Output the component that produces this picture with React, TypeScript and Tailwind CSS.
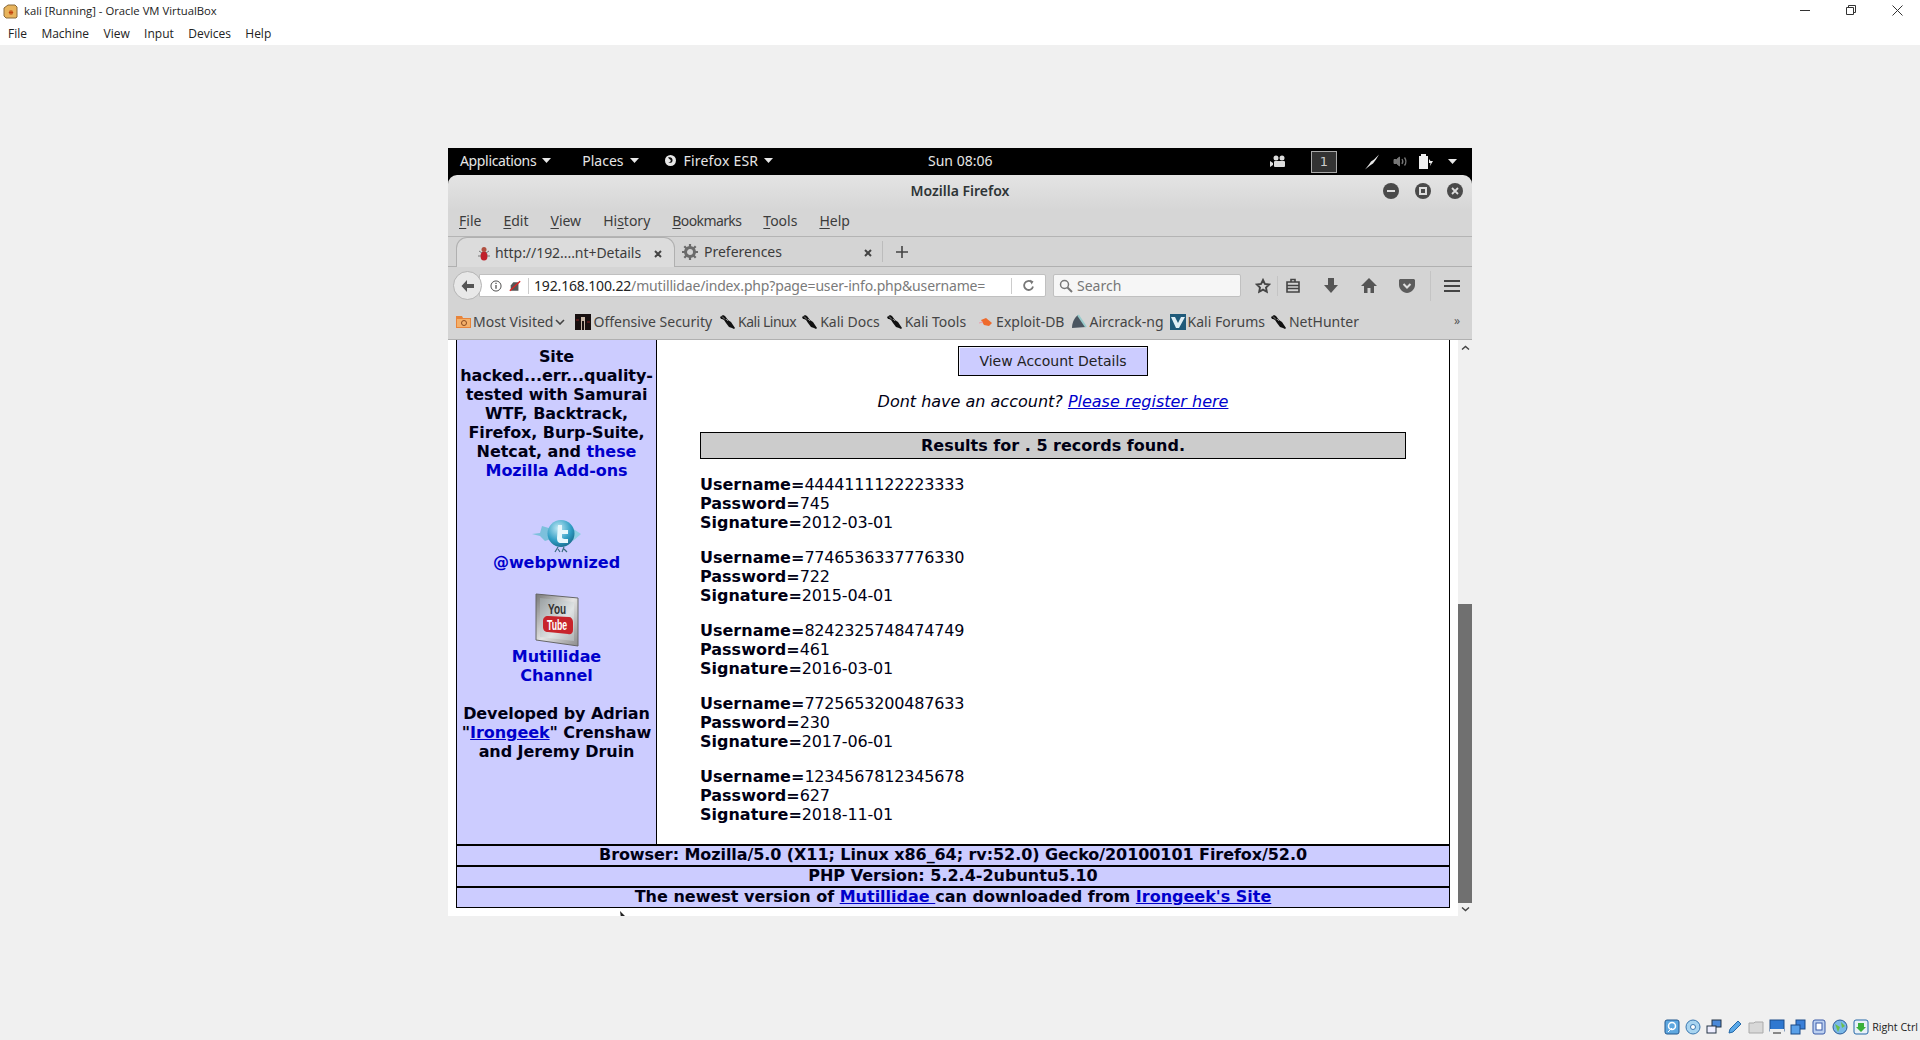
import React from "react";

const Caret = ({ c = "#e8e8e8" }: { c?: string }) => (
  <svg width="9" height="5" viewBox="0 0 9 5" className="ml-[6px]"><path d="M0 0h9L4.500 5z" fill={c} /></svg>
);

const Dragon = () => (
  <svg width="16" height="16" viewBox="0 0 16 16" className="shrink-0">
    <path d="M0 3l3-2 2 1 3 4 3 2 4 6-1 1-2-1-3-1-3-4-2-3-2-1-1 0z" fill="#111" />
    <path d="M2 2.500l3 3M6 5l2 2" stroke="#888" strokeWidth="1" />
  </svg>
);

const Under = ({ k, rest, cls }: { k: string; rest: string; cls?: string }) => (
  <span className={cls}><span className="underline decoration-1 underline-offset-2">{k}</span>{rest}</span>
);

function VBoxBar() {
  return (
    <div className="bg-white h-[45px] shrink-0 font-['Open_Sans',sans-serif] text-[#222]">
      <div className="h-[23px] flex items-center pl-[3px] relative text-[11.3px]">
        <svg width="15" height="15" viewBox="0 0 15 15" className="mr-[6px]">
          <path d="M1 4l4-3h7l2 2v10l-1 1H3l-2-2z" fill="#e8b45c" stroke="#8a6a3a" />
          <path d="M8 6v5M5.800 8.500h4.400M6.200 7l3.600 3M9.800 7l-3.600 3" stroke="#c2410c" strokeWidth="1" />
        </svg>
        <span>kali [Running] - Oracle VM VirtualBox</span>
        <div className="absolute right-0 top-0 flex h-[20px] items-center">
          <div className="w-[46px] flex justify-center"><div className="w-[10px] h-px bg-[#333]" /></div>
          <div className="w-[46px] flex justify-center">
            <svg width="10" height="10" viewBox="0 0 10 10" fill="none" stroke="#333"><path d="M.5 2.500h7v7h-7zM2.500 2.500v-2h7v7h-2" /></svg>
          </div>
          <div className="w-[46px] flex justify-center">
            <svg width="11" height="11" viewBox="0 0 11 11" stroke="#333"><path d="M.5.5l10 10M10.500.5l-10 10" /></svg>
          </div>
        </div>
      </div>
      <div className="h-[22px] flex items-center gap-[14.4px] pl-[8px] text-[12px]">
        <span>File</span><span>Machine</span><span>View</span><span>Input</span><span>Devices</span><span>Help</span>
      </div>
    </div>
  );
}

function GnomeBar() {
  return (
    <div className="h-[27px] bg-black text-[#e6e6e6] flex items-center font-['Noto_Sans',sans-serif] text-[14px] relative shrink-0">
      <div className="flex items-center pl-[12px] -mt-[2px]"><span className="tracking-[-0.35px]">Applications</span><Caret /></div>
      <div className="flex items-center pl-[31px] -mt-[2px]"><span>Places</span><Caret /></div>
      <div className="flex items-center pl-[25px] -mt-[2px]">
        <svg width="13" height="13" viewBox="0 0 13 13" className="mr-[7px]">
          <circle cx="6.500" cy="6.500" r="5.500" fill="#e8e8e8" />
          <path d="M4 3.500c3-1 5 1 4.500 3.500-.5 2-3 2.500-4 1 1.500.5 2.500-.5 2.300-1.500C6.600 5.500 5 5 4 3.500z" fill="#111" />
        </svg>
        <span className="tracking-[0.2px]">Firefox ESR</span><Caret />
      </div>
      <span className="absolute left-[480px] top-[2px]">Sun 08:06</span>
      <div className="ml-auto flex items-center">
        <svg width="16" height="13" viewBox="0 0 16 13" fill="#ddd" className="mr-[25px]">
          <circle cx="6" cy="3" r="2.500" /><circle cx="12" cy="3" r="2.500" /><rect x="4" y="6" width="11" height="6" rx="1" /><path d="M0 6l3 2v2l-3 2z" />
        </svg>
        <div className="w-[26px] h-[22px] border border-[#aaa] bg-[#333] text-[#ccc] flex items-center justify-center text-[13px] mr-[28px] font-['DejaVu_Sans',sans-serif]">1</div>
        <svg width="15" height="16" viewBox="0 0 15 16" className="mr-[13px]"><path d="M0 15.500l4-5 2-3 3-2 5-5-3 5-3 4-3 2z" fill="#e8e8e8" /></svg>
        <svg width="16" height="13" viewBox="0 0 16 13" fill="none" stroke="#777" className="mr-[9px]">
          <path d="M1 4.500h2.500L6.500 2v9l-3-2.500H1z" fill="#777" /><path d="M9 4c1 1.500 1 3.500 0 5M11.500 2.500c1.800 2.500 1.800 5.500 0 8" strokeWidth="1.300" />
        </svg>
        <svg width="16" height="17" viewBox="0 0 16 17" className="mr-[14px]">
          <path d="M1 3h2V1h5v2h2v13H1z" fill="#eee" /><path d="M11 6l1.500 2H15l-3 5 .5-3H11z" fill="#eee" />
        </svg>
        <svg width="9" height="5" viewBox="0 0 9 5" className="mr-[15px]"><path d="M0 0h9L4.500 5z" fill="#e8e8e8" /></svg>
      </div>
    </div>
  );
}

const WinBtn = ({ children }: { children: React.ReactNode }) => (
  <div className="w-[16px] h-[16px] rounded-full bg-[#4a4a4a] flex items-center justify-center">{children}</div>
);

function TitleBar() {
  return (
    <div className="h-[35px] rounded-t-[9px] bg-gradient-to-b from-[#e4e4e4] to-[#d6d6d6] flex items-center justify-center relative font-['Noto_Sans',sans-serif] text-[14px] font-semibold text-[#2e3436] shrink-0">
      <span className="-mt-[4px]">Mozilla Firefox</span>
      <div className="absolute right-[9px] top-[8px] flex gap-[16px]">
        <WinBtn><div className="w-[8px] h-[2px] bg-[#ddd]" /></WinBtn>
        <WinBtn><div className="w-[8px] h-[8px] border-2 border-[#ddd]" /></WinBtn>
        <WinBtn><svg width="8" height="8" viewBox="0 0 8 8" stroke="#ddd" strokeWidth="1.800"><path d="M1 1l6 6M7 1L1 7" /></svg></WinBtn>
      </div>
    </div>
  );
}

function MenuBar() {
  return (
    <div className="h-[27px] bg-[#d6d6d6] border-b border-[#b4b4b4] flex items-start gap-[22px] pl-[11px] font-['Noto_Sans',sans-serif] text-[14px] text-[#3c3c3c] shrink-0">
      <Under k="F" rest="ile" /><Under k="E" rest="dit" /><Under k="V" rest="iew" />
      <span>Hi<span className="underline decoration-1 underline-offset-2">s</span>tory</span>
      <Under k="B" rest="ookmarks" cls="tracking-[-0.6px]" /><Under k="T" rest="ools" /><Under k="H" rest="elp" />
    </div>
  );
}

function TabBar() {
  return (
    <div className="h-[30px] bg-[#d4d4d4] border-b border-[#b0b0b0] flex items-stretch pl-[8px] font-['Noto_Sans',sans-serif] text-[14px] text-[#3c3c3c] shrink-0">
      <div className="w-[219px] h-[30px] bg-[#dcdcdc] border border-b-0 border-[#b0b0b0] rounded-t-[11px] flex items-center pl-[20px] relative">
        <svg width="14" height="16" viewBox="0 0 14 16" className="mr-[4px]">
          <ellipse cx="7" cy="11" rx="3.500" ry="4.500" fill="#c0202a" /><circle cx="7" cy="4.500" r="2.500" fill="#b05040" />
          <path d="M2 6l3 2M12 6L9 8M1 11h3M13 11h-3" stroke="#777" strokeWidth="1" />
        </svg>
        <span className="tracking-[-0.05px]">http://192....nt+Details</span>
        <svg width="8" height="8" viewBox="0 0 8 8" stroke="#444" strokeWidth="2" className="absolute left-[197px] top-[12px]"><path d="M1 1l6 6M7 1L1 7" /></svg>
      </div>
      <div className="w-[207px] flex items-center pl-[7px] relative">
        <svg width="16" height="16" viewBox="0 0 16 16" className="mr-[6px]">
          <circle cx="8" cy="8" r="4.500" fill="none" stroke="#6b6b6b" strokeWidth="3" />
          <path d="M8 0v3M8 13v3M0 8h3M13 8h3M2.300 2.300l2 2M11.700 11.700l2 2M2.300 13.700l2-2M11.700 4.300l2-2" stroke="#6b6b6b" strokeWidth="2.200" />
        </svg>
        <span>Preferences</span>
        <svg width="8" height="8" viewBox="0 0 8 8" stroke="#444" strokeWidth="2" className="absolute right-[10px] top-[12px]"><path d="M1 1l6 6M7 1L1 7" /></svg>
      </div>
      <div className="flex items-center w-[38px] justify-center border-l border-[#bcbcbc] my-[4px]">
        <svg width="12" height="12" viewBox="0 0 12 12" stroke="#444" strokeWidth="1.600"><path d="M6 0v12M0 6h12" /></svg>
      </div>
    </div>
  );
}

function NavBar() {
  return (
    <div className="h-[37px] bg-[#d4d4d4] flex items-center pl-[5px] font-['Noto_Sans',sans-serif] text-[14px] shrink-0 relative">
      <div className="w-[29px] h-[29px] rounded-full border border-[#b4b4b4] bg-[#e8e8e8] flex items-center justify-center z-10 shrink-0">
        <svg width="15" height="14" viewBox="0 0 15 14"><path d="M7 1L1.500 7 7 13V9h7V5H7z" fill="#555" /></svg>
      </div>
      <div className="w-[567px] h-[23px] bg-white border border-[#c0c0c0] rounded-r-[2px] -ml-[3px] flex items-center pl-[10px] relative shrink-0">
        <svg width="12" height="12" viewBox="0 0 13 13" fill="none" stroke="#444" className="mr-[7px]">
          <circle cx="6.500" cy="6.500" r="5.500" /><path d="M6.500 5.500v4M6.500 3v1.300" strokeWidth="1.300" />
        </svg>
        <svg width="12" height="12" viewBox="0 0 14 13" className="mr-[7px]">
          <path d="M2 12V6l3-4h6v10z" fill="#555" /><path d="M1 12L13 1" stroke="#d22" strokeWidth="1.600" />
        </svg>
        <div className="w-px h-[16px] bg-[#ccc] mr-[5px]" />
        <span className="text-[#222] whitespace-nowrap tracking-[-0.16px]">192.168.100.22<span className="text-[#7a7a7a]">/mutillidae/index.php?page=user-info.php&amp;username=</span></span>
        <div className="absolute right-[33px] top-[3px] w-px h-[16px] bg-[#ccc]" />
        <svg width="13" height="13" viewBox="0 0 13 13" fill="none" stroke="#777" strokeWidth="1.800" className="absolute right-[10px] top-[4px]">
          <path d="M11 7.500A4.500 4.500 0 1 1 9.500 3" /><path d="M8 .8l3.500 1.700-2 3z" fill="#777" stroke="none" />
        </svg>
      </div>
      <div className="w-[188px] h-[23px] bg-[#f6f6f6] border border-[#c0c0c0] rounded-[2px] ml-[7px] flex items-center pl-[5px] text-[#777] shrink-0">
        <svg width="14" height="14" viewBox="0 0 14 14" fill="none" stroke="#777" strokeWidth="1.500" className="mr-[4px]">
          <circle cx="5.500" cy="5.500" r="4" /><path d="M8.500 8.500l4.500 4.500" strokeWidth="2" />
        </svg>
        Search
      </div>
      <svg width="16" height="16" viewBox="0 0 24 24" fill="none" stroke="#444" strokeWidth="2.800" className="ml-[14px]">
        <path d="M12 3l2.800 6 6.400.8-4.700 4.400 1.200 6.400-5.700-3.200-5.700 3.200 1.200-6.400L2.800 9.800 9.200 9z" />
      </svg>
      <div className="w-px h-[20px] bg-[#c4c4c4] ml-[6px]" />
      <svg width="14" height="15" viewBox="0 0 14 15" fill="none" stroke="#444" strokeWidth="1.600" className="ml-[8px]">
        <path d="M1 4h12v10H1zM5 4V1.500h4V4M1 7.500h12M1 10.500h12" />
      </svg>
      <svg width="14" height="15" viewBox="0 0 14 15" className="ml-[24px]"><path d="M4 0h6v7h4l-7 8-7-8h4z" fill="#555" /></svg>
      <svg width="16" height="15" viewBox="0 0 16 15" className="ml-[23px]">
        <path d="M8 0L0 8h3v7h3.500v-5h3v5H13V8h3z" fill="#555" />
      </svg>
      <svg width="16" height="14" viewBox="0 0 16 14" className="ml-[22px]">
        <path d="M1 0h14l1 1v5c0 4-4 8-8 8S0 10 0 6V1z" fill="#5c5c5c" /><path d="M4.500 5L8 8.500 11.500 5" stroke="#ddd" strokeWidth="2" fill="none" />
      </svg>
      <div className="w-px h-[30px] bg-[#c4c4c4] ml-[15px]" />
      <div className="flex flex-col gap-[3px] ml-[13px]">
        <div className="w-[16px] h-[2px] bg-[#444]" /><div className="w-[16px] h-[2px] bg-[#444]" /><div className="w-[16px] h-[2px] bg-[#444]" />
      </div>
    </div>
  );
}

const Mark = ({ label, icon, cls, tcls }: { label: string; icon: React.ReactNode; cls: string; tcls?: string }) => (
  <div className={`flex items-center gap-[2px] ${cls}`}>{icon}<span className={tcls}>{label}</span></div>
);

function BookmarkBar() {
  return (
    <div className="h-[36px] bg-[#d4d4d4] border-b border-[#b0b0b0] flex items-center pl-[8px] font-['Noto_Sans',sans-serif] text-[14px] text-[#444] shrink-0 relative">
      <div className="flex items-center gap-[2px]">
        <svg width="15" height="15" viewBox="0 0 15 15"><path d="M0 2h6l1 2h8v10H0z" fill="#e8843a" /><path d="M1 5h13v8H1z" fill="#f4b06a" /><circle cx="8" cy="9" r="2.500" fill="none" stroke="#8a4a20" /></svg>
        <span>Most Visited</span>
        <svg width="10" height="6" viewBox="0 0 10 6" fill="none" stroke="#444" strokeWidth="1.600"><path d="M1 1l4 4 4-4" /></svg>
      </div>
      <Mark cls="ml-[10px]" label="Offensive Security" icon={<svg width="16" height="16" viewBox="0 0 16 16"><rect width="16" height="16" fill="#181010" /><path d="M6 3h4v13H9V7H7v9H6z" fill="#c9b8a8" /><path d="M1 6h3M12 8h3" stroke="#822" /></svg>} />
      <Mark cls="ml-[8px]" tcls="tracking-[-0.5px]" label="Kali Linux" icon={<Dragon />} />
      <Mark cls="ml-[6px]" label="Kali Docs" icon={<Dragon />} />
      <Mark cls="ml-[7px]" label="Kali Tools" icon={<Dragon />} />
      <Mark cls="ml-[12px]" label="Exploit-DB" icon={<svg width="16" height="16" viewBox="0 0 16 16"><path d="M3 6l5-2 6 5-3 3-5-1z" fill="#ee6a2c" /><path d="M1 9l4-1" stroke="#e9a" /></svg>} />
      <Mark cls="ml-[7px]" label="Aircrack-ng" icon={<svg width="16" height="16" viewBox="0 0 16 16"><path d="M1 14C1 8 4 3 7 1l8 12z" fill="#4a5560" /><path d="M7 1l8 12" stroke="#9cc" strokeWidth="2" /></svg>} />
      <Mark cls="ml-[6px]" label="Kali Forums" icon={<svg width="16" height="16" viewBox="0 0 16 16"><rect width="16" height="16" fill="#1f5a7a" /><path d="M1 3l5 11 3 0 6-11H11L8 9 5 3z" fill="#dfeef5" /></svg>} />
      <Mark cls="ml-[6px]" label="NetHunter" icon={<Dragon />} />
      <span className="absolute right-[12px] top-[8px] text-[#555] text-[12px]">»</span>
    </div>
  );
}

function Bird() {
  return (
    <svg width="49" height="33" viewBox="0 0 49 33" className="block mx-auto">
      <defs>
        <radialGradient id="tw" cx="0.400" cy="0.300" r="0.800"><stop offset="0" stopColor="#bfe9f5" /><stop offset="0.600" stopColor="#2f9dc4" /><stop offset="1" stopColor="#14607f" /></radialGradient>
      </defs>
      <path d="M0 14l8-1 2-7 10 3 2 9-9 3-5-5z" fill="#7cc0dc" />
      <path d="M40 8l9 6-8 7z" fill="#90d0e4" />
      <circle cx="29" cy="13.500" r="13.500" fill="url(#tw)" />
      <path d="M26 5h4v5h6v4h-6v3c0 2 2 2 6 2v4h-7c-3 0-4-2-4-5z" fill="#e8f8fc" />
      <path d="M26 27l-3 5M26 29l2 3M32 27l-2 5M32 29l3 3" stroke="#3a6a80" strokeWidth="1.200" />
    </svg>
  );
}

function YouTube() {
  return (
    <svg width="44" height="54" viewBox="0 0 44 54" className="block mx-auto">
      <defs>
        <linearGradient id="yt" x1="0" y1="0" x2="1" y2="1"><stop offset="0" stopColor="#777" /><stop offset="0.500" stopColor="#e4e4e4" /><stop offset="1" stopColor="#8c8c8c" /></linearGradient>
        <linearGradient id="ytb" x1="0" y1="0" x2="1" y2="1"><stop offset="0" stopColor="#9aa0a2" /><stop offset="0.600" stopColor="#dfe3e4" /><stop offset="1" stopColor="#b0b4b6" /></linearGradient>
      </defs>
      <path d="M1 1l42 4v48L1 47z" fill="url(#yt)" stroke="#666" />
      <path d="M5 5l34 4v39L5 44z" fill="url(#ytb)" />
      <path d="M8 28c0-3 2-5 5-5l21 1c2 0 4 2 4 5v8c0 3-2 5-5 4l-20-2c-3 0-5-2-5-5z" fill="#c8242c" />
      <text x="22" y="21" textAnchor="middle" fontSize="15" fontWeight="bold" fill="#333" fontFamily="Liberation Sans" textLength="18" lengthAdjust="spacingAndGlyphs">You</text>
      <text x="22" y="37" textAnchor="middle" fontSize="14" fontWeight="bold" fill="#fff" fontFamily="Liberation Sans" textLength="20" lengthAdjust="spacingAndGlyphs">Tube</text>
    </svg>
  );
}

const A = ({ children }: { children: React.ReactNode }) => <span className="text-[#0000cc]">{children}</span>;
const U = ({ children }: { children: React.ReactNode }) => <span className="text-[#0000cc] underline">{children}</span>;

function Sidebar() {
  return (
    <div className="w-[200px] bg-[#ccccff] border-r border-black text-center font-bold pt-[7px] shrink-0 tracking-[-0.07px]">
      <p className="-mx-[2px]">Site<br />hacked...err...quality-<br />tested with Samurai<br />WTF, Backtrack,<br />Firefox, Burp-Suite,<br />Netcat, and <A>these</A><br /><A>Mozilla Add-ons</A></p>
      <div className="mt-[40px]"><Bird /></div>
      <p><A>@webpwnized</A></p>
      <div className="mt-[21px]"><YouTube /></div>
      <p><A>Mutillidae<br />Channel</A></p>
      <p className="mt-[19px]">Developed by Adrian<br />"<U>Irongeek</U>" Crenshaw<br />and Jeremy Druin</p>
    </div>
  );
}

const records = [
  ["4444111122223333", "745", "2012-03-01"],
  ["7746536337776330", "722", "2015-04-01"],
  ["8242325748474749", "461", "2016-03-01"],
  ["7725653200487633", "230", "2017-06-01"],
  ["1234567812345678", "627", "2018-11-01"],
];

function Main() {
  return (
    <div className="flex-1 bg-white min-w-0 pt-[6px] pl-[43px] pr-[43px]">
      <div className="flex justify-center">
        <div className="w-[190px] h-[30px] bg-[#ccccff] border border-black shadow-[inset_1px_1px_0_#eeeeff] flex items-center justify-center text-[14px] text-[#222]">View Account Details</div>
      </div>
      <p className="text-center italic mt-[16px] h-[19px]">Dont have an account? <span className="text-[#0000cc] underline">Please register here</span></p>
      <div className="h-[27px] mt-[21px] bg-[#cccccc] border border-black flex items-center justify-center font-bold">Results for . 5 records found.</div>
      <div className="mt-[16px] flex flex-col gap-[16px]">
        {records.map((r) => (
          <div key={r[0]}>
            <div><b>Username=</b><span className="tracking-[-0.18px]">{r[0]}</span></div>
            <div><b>Password=</b><span className="tracking-[-0.18px]">{r[1]}</span></div>
            <div><b>Signature=</b><span className="tracking-[-0.18px]">{r[2]}</span></div>
          </div>
        ))}
      </div>
    </div>
  );
}

function Page() {
  return (
    <div className="flex h-[576px] bg-white font-['DejaVu_Sans',sans-serif] text-[16px] leading-[19px] text-[#000014] shrink-0 overflow-hidden relative">
      <div className="w-[8px] shrink-0" />
      <div className="w-[994px] shrink-0 flex flex-col h-[568px]">
        <div className="flex flex-1 min-h-0 border-l border-r border-black">
          <Sidebar />
          <Main />
        </div>
        <div className="border-x border-t-2 border-black bg-[#ccccff] text-center font-bold h-[21px] leading-[17px] shrink-0 tracking-[-0.07px]">Browser: Mozilla/5.0 (X11; Linux x86_64; rv:52.0) Gecko/20100101 Firefox/52.0</div>
        <div className="border-x border-t-2 border-black bg-[#ccccff] text-center font-bold h-[21px] leading-[17px] shrink-0">PHP Version: 5.2.4-2ubuntu5.10</div>
        <div className="border-x border-t-2 border-b border-black bg-[#ccccff] text-center font-bold h-[22px] leading-[17px] shrink-0">The newest version of <U>Mutillidae </U>can downloaded from <U>Irongeek's Site</U></div>
      </div>
      <div className="w-[8px] shrink-0" />
      <div className="w-[14px] shrink-0 bg-[#f0f0f0] flex flex-col h-[576px]">
        <div className="h-[14px] flex items-center justify-center">
          <svg width="9" height="5" viewBox="0 0 9 5" fill="none" stroke="#444" strokeWidth="1.400"><path d="M1 4.500l3.500-3 3.500 3" /></svg>
        </div>
        <div className="h-[250px]" />
        <div className="h-[299px] bg-[#707070]" />
        <div className="h-[13px] flex items-center justify-center">
          <svg width="9" height="5" viewBox="0 0 9 5" fill="none" stroke="#444" strokeWidth="1.400"><path d="M1 .5l3.500 3 3.500-3" /></svg>
        </div>
      </div>
      <svg width="6" height="8" viewBox="0 0 6 8" className="absolute left-[172px] top-[571px]"><path d="M0 0l5 5H2.500L1 7z" fill="#222" /></svg>
    </div>
  );
}

const Si = ({ children }: { children: React.ReactNode }) => (
  <svg width="16" height="16" viewBox="0 0 16 16" className="shrink-0">{children}</svg>
);

function StatusBar() {
  return (
    <div className="absolute right-[2px] bottom-[5px] flex items-center gap-[5px] font-['Open_Sans',sans-serif] text-[10.7px] text-[#222]">
      <Si><rect x="1" y="1" width="14" height="14" rx="2" fill="#5fa8e0" stroke="#23588f" /><circle cx="8" cy="7" r="3.500" fill="none" stroke="#fff" strokeWidth="1.500" /><path d="M4 13l4-4" stroke="#fff" /></Si>
      <Si><circle cx="8" cy="8" r="7" fill="#a8d4f0" stroke="#3a78b0" /><circle cx="8" cy="8" r="2.500" fill="#fff" stroke="#3a78b0" /></Si>
      <Si><rect x="6" y="1" width="9" height="7" fill="#4a88d8" stroke="#234" /><rect x="1" y="7" width="9" height="7" fill="#eef" stroke="#234" /></Si>
      <Si><path d="M2 14l1-4 8-8 3 3-8 8z" fill="#5aa8e8" stroke="#2468a8" /></Si>
      <Si><path d="M1 4h5l1-1h8v11H1z" fill="#d8d8d8" stroke="#aaa" /></Si>
      <Si><rect x="1" y="1" width="14" height="11" fill="#2f78d0" stroke="#1a4a88" /><rect x="1" y="10" width="14" height="3" fill="#eee" /><rect x="4" y="13" width="8" height="2" fill="#888" /></Si>
      <Si><rect x="6" y="1" width="9" height="9" fill="#3a7fd8" stroke="#1a4a88" /><rect x="1" y="6" width="9" height="9" fill="#5aa0e8" stroke="#1a4a88" /></Si>
      <Si><rect x="2" y="1" width="12" height="14" rx="2" fill="#bcd0f0" stroke="#3a5aa8" /><rect x="5" y="4" width="6" height="7" fill="#fff" stroke="#3a5aa8" /></Si>
      <Si><circle cx="8" cy="8" r="7" fill="#7ab8e8" stroke="#2a5a98" /><path d="M3 5l5 3-2 5zM9 3l4 4-3 2z" fill="#6ac04a" /></Si>
      <Si><rect x="1" y="1" width="14" height="14" rx="2" fill="#e8f0f8" stroke="#2468a8" /><path d="M5 4h6v4h2l-5 5-5-5h2z" fill="#3ab03a" /></Si>
      <span className="-ml-[2px]">Right Ctrl</span>
    </div>
  );
}

export default function App() {
  return (
    <div className="h-[1040px] w-[1920px] bg-[#f0f0f0] flex flex-col relative overflow-hidden">
      <VBoxBar />
      <div className="flex-1 flex justify-center pt-[103px]">
        <div className="w-[1024px] h-[768px] flex flex-col bg-black">
          <GnomeBar />
          <TitleBar />
          <MenuBar />
          <TabBar />
          <NavBar />
          <BookmarkBar />
          <Page />
        </div>
      </div>
      <StatusBar />
    </div>
  );
}
